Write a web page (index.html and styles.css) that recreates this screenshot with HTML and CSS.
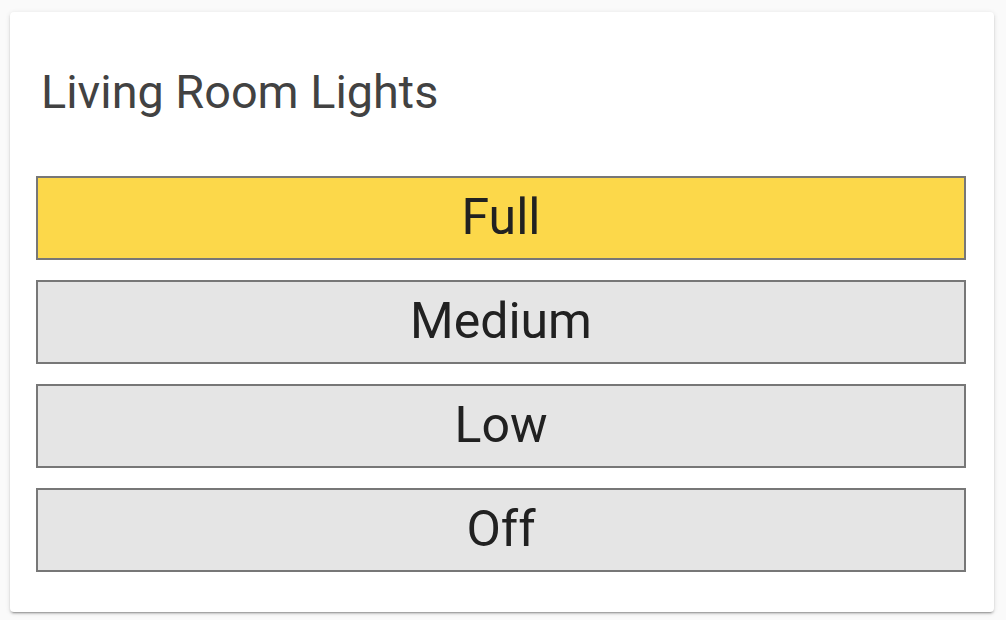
FILE: index.html
```html
<!DOCTYPE html>
<html>
<head>
<meta charset="utf-8">
<link rel="stylesheet" href="styles.css">
</head>
<body>
<div class="card">
  <div class="title">Living Room Lights</div>
  <div class="options">
    <div class="option active">Full</div>
    <div class="option">Medium</div>
    <div class="option">Low</div>
    <div class="option">Off</div>
  </div>
</div>
</body>
</html>
```

FILE: styles.css
```css
html, body {
  margin: 0;
  padding: 0;
  background: #fafafa;
  font-family: Roboto, "Noto Sans", sans-serif;
}
body {
  padding: 12px 12px 0 10px;
  width: 984px;
  height: 608px;
}
.card {
  background: #ffffff;
  border-radius: 4px;
  box-shadow: 0 2px 2px 0 rgba(0,0,0,0.14), 0 1px 5px 0 rgba(0,0,0,0.12), 0 3px 1px -2px rgba(0,0,0,0.2);
  padding: 52px 28px 40px 26px;
  height: 600px;
  box-sizing: border-box;
}
.title {
  font-size: 46.8px;
  line-height: 56px;
  color: #424242;
  padding-left: 5px;
}
.options {
  margin-top: 56px;
  display: flex;
  flex-direction: column;
  gap: 20px;
}
.option {
  height: 84px;
  box-sizing: border-box;
  border: 2px solid #777777;
  background: #e5e5e5;
  color: #212121;
  font-size: 50px;
  padding-bottom: 2px;
  display: flex;
  align-items: center;
  justify-content: center;
}
.option.active {
  background: #fcd84a;
}
```
